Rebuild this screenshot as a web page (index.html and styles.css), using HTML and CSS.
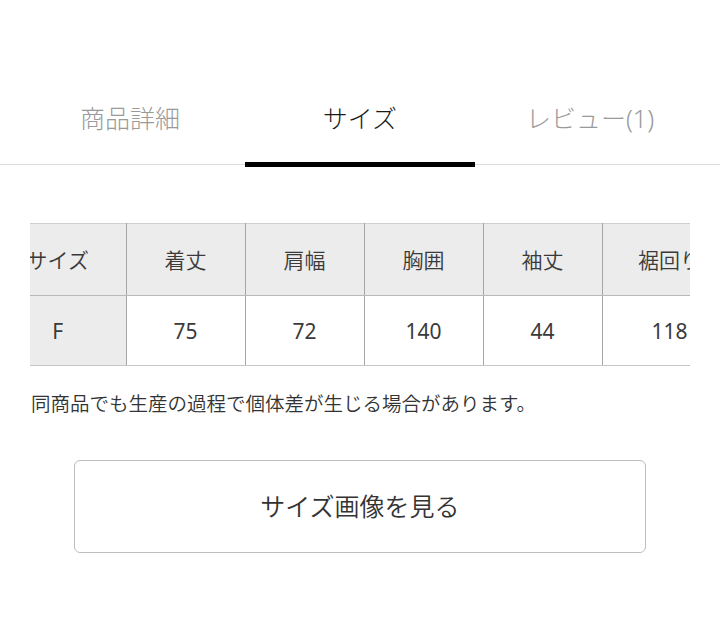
FILE: index.html
```html
<!DOCTYPE html>
<html lang="ja">
<head>
<meta charset="utf-8">
<title>サイズ</title>
<link rel="stylesheet" href="styles.css">
</head>
<body>
<nav class="tabs">
  <div class="tab">商品詳細</div>
  <div class="tab active">サイズ</div>
  <div class="tab">レビュー(1)</div>
</nav>
<div class="size-wrap">
  <table class="size-table">
    <colgroup>
      <col class="c-first">
      <col class="c-std">
      <col class="c-std">
      <col class="c-std">
      <col class="c-std">
      <col class="c-last">
    </colgroup>
    <tr class="head">
      <th class="first">サイズ</th>
      <th>着丈</th>
      <th>肩幅</th>
      <th>胸囲</th>
      <th>袖丈</th>
      <th>裾回り</th>
    </tr>
    <tr class="data">
      <th class="first">F</th>
      <td>75</td>
      <td>72</td>
      <td>140</td>
      <td>44</td>
      <td>118</td>
    </tr>
  </table>
</div>
<p class="note">同商品でも生産の過程で個体差が生じる場合があります。</p>
<button class="size-btn" type="button">サイズ画像を見る</button>
</body>
</html>
```

FILE: styles.css
```css
html, body {
  margin: 0;
  padding: 0;
  background: #fff;
}
body {
  font-family: "Noto Sans", "Noto Sans CJK JP", sans-serif;
  color: #333;
}
.tabs {
  display: grid;
  grid-template-columns: 230px 230px 230px;
  padding: 100px 15px 0;
  border-bottom: 1px solid #dcdcdc;
  align-items: start;
}
.tab {
  font-size: 25px;
  line-height: 37px;
  height: 37px;
  padding-bottom: 27px;
  text-align: center;
  color: #9a9a9a;
  white-space: nowrap;
  font-weight: 300;
}
.tab.active {
  color: #1a1a1a;
  padding-bottom: 25px;
  border-bottom: 5px solid #000;
  margin-bottom: -3px;
}
.size-wrap {
  margin: 58px 30px 0;
  overflow: hidden;
}
.size-table {
  border-collapse: collapse;
  table-layout: fixed;
  width: 746px;
  margin-left: -40px;
  font-size: 21px;
  color: #3a3a3a;
}
.c-first { width: 136px; }
.c-std { width: 119px; }
.c-last { width: 135px; }
.size-table th,
.size-table td {
  font-weight: 350;
  text-align: center;
  padding: 0;
  white-space: nowrap;
  overflow: hidden;
  border-left: 1px solid #a6a6a6;
  border-right: 1px solid #a6a6a6;
}
.size-table th.first {
  border-left: none;
  background: #ececec;
}
.head th {
  box-sizing: border-box;
  height: 72px;
  padding-bottom: 2px;
  background: #ececec;
  border-top: 1px solid #cfcfcf;
  border-bottom: 1px solid #b9b9b9;
}
.data th,
.data td {
  height: 69px;
  border-bottom: 1px solid #c6c6c6;
}
.data td {
  background: #fff;
}
.data th,
.data td {
  font-weight: 400;
}
.note {
  margin: 23px 0 0;
  padding-left: 31px;
  font-size: 19.5px;
  line-height: 28px;
  color: #333;
  font-weight: 350;
  font-family: "Noto Sans CJK JP", sans-serif;
}
.size-btn {
  display: block;
  box-sizing: border-box;
  width: 572px;
  height: 93px;
  margin: 43px 0 0 74px;
  background: #fff;
  border: 1px solid #bdbdbd;
  border-radius: 6px;
  font-family: "Noto Sans CJK JP", sans-serif;
  font-size: 25px;
  font-weight: 350;
  color: #333;
  padding: 0 0 4px;
}
```
